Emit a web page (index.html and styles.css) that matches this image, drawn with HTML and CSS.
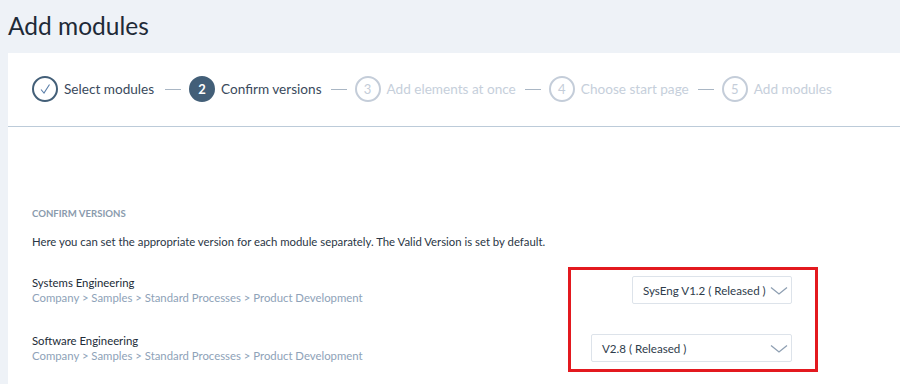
FILE: index.html
```html
<!DOCTYPE html>
<html lang="en">
<head>
    <meta charset="UTF-8">
    <meta name="viewport" content="width=device-width, initial-scale=1.0">
    <title>Add modules</title>
    <link rel="stylesheet" href="styles.css">
</head>
<body>
    <h1 class="page-title">Add modules</h1>

    <div class="card">
        <div class="stepper">
            <div class="step done">
                <span class="step-circle">
                    <svg width="12" height="12" viewBox="0 0 12 12"><path d="M2 6.5 L5 10 L10.5 1.5" fill="none" stroke="#5a7ea8" stroke-width="1.1"/></svg>
                </span>
                <span class="step-label">Select modules</span>
            </div>
            <span class="step-sep"></span>
            <div class="step active">
                <span class="step-circle">2</span>
                <span class="step-label">Confirm versions</span>
            </div>
            <span class="step-sep"></span>
            <div class="step">
                <span class="step-circle">3</span>
                <span class="step-label">Add elements at once</span>
            </div>
            <span class="step-sep"></span>
            <div class="step">
                <span class="step-circle">4</span>
                <span class="step-label">Choose start page</span>
            </div>
            <span class="step-sep"></span>
            <div class="step">
                <span class="step-circle">5</span>
                <span class="step-label">Add modules</span>
            </div>
        </div>

        <div class="content">
            <div class="section-title">Confirm versions</div>
            <p class="intro">Here you can set the appropriate version for each module separately. The Valid Version is set by default.</p>

            <div class="module-row">
                <div class="module-info">
                    <div class="module-name">Systems Engineering</div>
                    <div class="module-path">Company &gt; Samples &gt; Standard Processes &gt; Product Development</div>
                </div>
                <div class="version-select select-short">
                    <span>SysEng V1.2 ( Released )</span>
                    <svg class="chevron" width="18" height="10" viewBox="0 0 18 10"><path d="M1 1.5 L9 8 L17 1.5" fill="none" stroke="#8e9fb2" stroke-width="1.3"/></svg>
                </div>
            </div>

            <div class="module-row">
                <div class="module-info">
                    <div class="module-name">Software Engineering</div>
                    <div class="module-path">Company &gt; Samples &gt; Standard Processes &gt; Product Development</div>
                </div>
                <div class="version-select select-long">
                    <span>V2.8 ( Released )</span>
                    <svg class="chevron" width="18" height="10" viewBox="0 0 18 10"><path d="M1 1.5 L9 8 L17 1.5" fill="none" stroke="#8e9fb2" stroke-width="1.3"/></svg>
                </div>
            </div>
        </div>
    </div>

    <div class="highlight"></div>
</body>
</html>
```

FILE: styles.css
```css
:root {
    --page-bg: #eef2f7;
    --slate: #435f78;
    --muted: #c4cdd9;
    --text: #2a3645;
    --path: #8ea2b8;
}

body {
    font-family: Lato, "Noto Sans", sans-serif;
    margin: 0;
    padding: 0;
    background-color: var(--page-bg);
    color: var(--text);
    overflow: hidden;
}

.page-title {
    margin: 0;
    padding: 10px 8px 11px;
    font-size: 24.5px;
    font-weight: 400;
    line-height: 32px;
    color: #1e2a37;
}

.card {
    margin-left: 8px;
    background-color: #fff;
    min-height: 340px;
}

.stepper {
    display: flex;
    align-items: center;
    height: 71px;
    padding: 0 0 2px 24px;
    border-bottom: 1px solid #bccbd9;
}

.step {
    display: flex;
    align-items: center;
    gap: 6px;
}

.step-circle {
    display: flex;
    align-items: center;
    justify-content: center;
    width: 22px;
    height: 22px;
    border: 2px solid var(--muted);
    border-radius: 50%;
    font-size: 13px;
    color: var(--muted);
}

.step-label {
    font-size: 13.6px;
    color: #c6cfdb;
}

.step.done .step-circle {
    border-color: var(--slate);
}

.step.done .step-label {
    margin-right: 2px;
}

.step.done .step-label,
.step.active .step-label {
    color: #3a4a5c;
}

.step.active .step-circle {
    background-color: var(--slate);
    border-color: var(--slate);
    color: #fff;
    font-weight: 700;
}

.step-sep {
    width: 16px;
    height: 1px;
    margin: 1px 8px 0 9px;
    background-color: #a9b6c4;
}

.content {
    width: 760px;
    padding: 80px 0 0 24px;
}

.section-title {
    font-size: 9.6px;
    font-weight: 700;
    line-height: 14px;
    text-transform: uppercase;
    color: #8a9bad;
}

.intro {
    margin: 13px 0 25px;
    font-size: 11.35px;
    line-height: 16px;
}

.module-row {
    display: flex;
    align-items: center;
    justify-content: space-between;
    margin-bottom: 28px;
}

.module-name {
    font-size: 11.35px;
    line-height: 15px;
    color: #222c38;
}

.module-path {
    font-size: 11.35px;
    line-height: 15px;
    color: var(--path);
}

.version-select {
    display: flex;
    align-items: center;
    justify-content: space-between;
    box-sizing: border-box;
    height: 28px;
    padding: 0 3px 0 10px;
    border: 1px solid #dde3ea;
    border-radius: 2px;
    font-size: 11.6px;
    color: #2e3c4b;
}

.select-short {
    width: 160px;
}

.select-long {
    width: 201px;
}

.chevron {
    margin-top: 1px;
}

.highlight {
    position: absolute;
    left: 568px;
    top: 267px;
    width: 244px;
    height: 99px;
    border: 3px solid #e3191f;
}
```
